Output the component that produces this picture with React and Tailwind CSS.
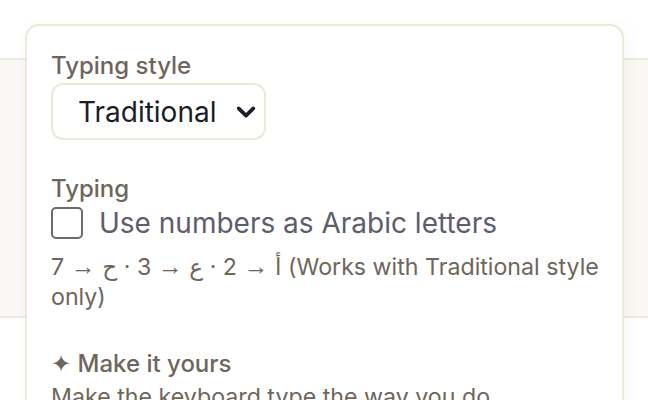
import React from "react";

function Arrow() {
  return <span className="text-[25px] leading-none" style={{ fontFamily: "'Noto Sans', sans-serif" }}>→</span>;
}

export default function App() {
  return (
    <div
      className="relative w-[648px] h-[400px] overflow-hidden bg-white"
      style={{ fontFamily: "Inter, 'Noto Sans', 'DejaVu Sans', sans-serif" }}
    >
      <div className="mt-[58px] h-[260px] w-full border-y-2 border-[#eee9df] bg-[#faf8f4]" />
      <div className="absolute left-[25px] top-[24px] w-[599px] h-[420px] rounded-[14px] border-2 border-[#ede7dc] bg-white shadow-[4px_4px_16px_rgba(120,100,60,0.06)] pl-[24px] pt-[25px]">
        <div className="text-[24px] leading-[30px] font-medium text-[#6f665b]">Typing style</div>
        <div className="mt-[2px] flex h-[57px] w-[215px] items-center rounded-[12px] border-2 border-[#ede7dc] bg-white pl-[25px] pr-[6px]">
          <span className="flex-1 text-[28px] text-[#1c1d26]">Traditional</span>
          <svg width="22" height="22" viewBox="0 0 24 24" className="mr-[1px]">
            <path d="M4 8l8 8 8-8" fill="none" stroke="#1c1d26" strokeWidth="4" strokeLinecap="round" strokeLinejoin="round" />
          </svg>
        </div>

        <div className="mt-[34px] text-[24px] leading-[30px] font-medium text-[#6f665b]">Typing</div>
        <label className="mt-[1px] flex items-center gap-[16px]">
          <span className="h-[32px] w-[32px] rounded-[5px] border-2 border-[#6b6b6e] bg-white" />
          <span className="text-[28px] leading-[36px] text-[#5b5e6b]">Use numbers as Arabic letters</span>
        </label>
        <p dir="ltr" className="mt-[11px] pr-[20px] text-[23.2px] leading-[30px] text-[#6f665b]">
          7 <Arrow /> <bdi>ح</bdi> · 3 <Arrow /> <bdi>ع</bdi> · 2 <Arrow /> <bdi>أ</bdi> (Works with Traditional style only)
        </p>

        <div className="mt-[37px] text-[24px] leading-[30px] font-medium text-[#6f665b]">✦ Make it yours</div>
        <p className="mt-[3px] text-[23.2px] leading-[30px] text-[#6f665b]">Make the keyboard type the way you do.</p>
      </div>
    </div>
  );
}
